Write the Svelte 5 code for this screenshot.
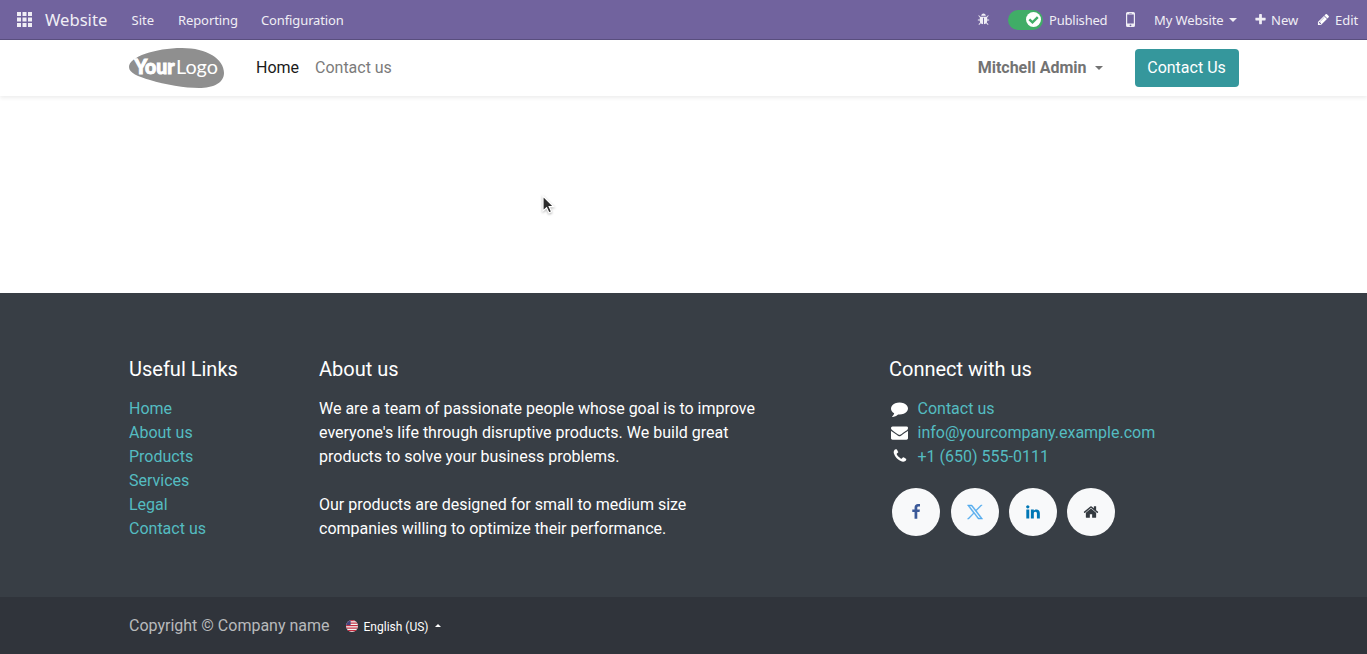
<script>
  const icons = {
    bug: 'M1696 960q0 26-19 45t-45 19h-224q0 171-67 290l208 209q19 19 19 45t-19 45q-18 19-45 19t-45-19l-198-197q-5 5-15 13t-42 28.5-65 36.5-82 29-97 13v-896h-128v896q-51 0-101.5-13.5t-87-33-66-39-43.5-32.5l-15-14-183 207q-20 21-48 21-24 0-43-16-19-18-20.5-44.5t15.5-46.5l202-227q-58-114-58-274h-224q-26 0-45-19t-19-45 19-45 45-19h224v-294l-173-173q-19-19-19-45t19-45 45-19 45 19l173 173h844l173-173q19-19 45-19t45 19 19 45-19 45l-173 173v294h224q26 0 45 19t19 45zm-480-576h-640q0-133 93.5-226.5t226.5-93.5 226.5 93.5 93.5 226.5z',
    plus: 'M1600 736v192q0 40-28 68t-68 28h-416v416q0 40-28 68t-68 28h-192q-40 0-68-28t-28-68v-416h-416q-40 0-68-28t-28-68v-192q0-40 28-68t68-28h416v-416q0-40 28-68t68-28h192q40 0 68 28t28 68v416h416q40 0 68 28t28 68z',
    pencil: 'M491 1536l91-91-235-235-91 91v107h128v128h107zm523-928q0-22-22-22-10 0-17 7l-542 542q-7 7-7 17 0 22 22 22 10 0 17-7l542-542q7-7 7-17zm-54-192l416 416-832 832h-416v-416zm683 96q0 53-37 90l-166 166-416-416 166-165q36-38 90-38 53 0 91 38l235 234q37 39 37 91z',
    comment: 'M1792 896q0 174-120 321.5t-326 233-450 85.5q-70 0-145-8-198 175-460 242-49 14-114 22h-5q-15 0-27-10.5t-16-27.5v-1q-3-4-.5-12t2-10 4.5-9.5l6-9 7-8.5 8-9q7-8 31-34.5t34.5-38 31-39.5 32.5-51 27-59 26-76q-157-89-247.5-220t-90.5-281q0-174 120-321.5t326-233 450-85.5 450 85.5 326 233 120 321.5z',
    envelope: 'M1792 710v794q0 66-47 113t-113 47h-1472q-66 0-113-47t-47-113v-794q44 49 101 87 362 246 497 345 57 42 92.5 65.5t94.5 48 110 24.5h2q51 0 110-24.5t94.5-48 92.5-65.5q170-123 498-345 57-39 100-87zm0-294q0 79-49 151t-122 123q-376 261-468 325-10 7-42.5 31t-54 38.5-52 32.5-57.5 27-50 9h-2q-23 0-50-9t-57.5-27-52-32.5-54-38.5-42.5-31q-91-64-262-182.5t-205-142.5q-62-42-117-115.5t-55-136.5q0-78 41.5-130t118.5-52h1472q65 0 112.5 47t47.5 113z',
    phone: 'M1600 1240q0 27-10 70.5t-21 68.5q-21 50-122 106-94 51-186 51-27 0-53-3.5t-57.5-12.5-47-14.5-55.5-20.5-49-18q-98-35-175-83-127-79-264-216t-216-264q-48-77-83-175-3-9-18-49t-20.5-55.5-14.5-47-12.5-57.5-3.5-53q0-92 51-186 56-101 106-122 25-11 68.5-21t70.5-10q14 0 21 3 18 6 53 76 11 19 30 54t35 63.5 31 53.5q3 4 17.5 25t21.5 35.5 7 28.5q0 20-28.5 50t-62 55-62 53-28.5 46q0 9 5 22.5t8.5 20.5 14 24 11.5 19q76 137 174 235t235 174q2 1 19 11.5t24 14 20.5 8.5 22.5 5q18 0 46-28.5t53-62 55-62 50-28.5q14 0 28.5 7t35.5 21.5 25 17.5q25 15 53.5 31t63.5 35 54 30q70 35 76 53 3 7 3 21z',
    facebook: 'M1343 12v264h-157q-86 0-116 36t-30 108v189h293l-39 296h-254v759h-306v-759h-255v-296h255v-218q0-186 104-288.5t277-102.5q147 0 228 12z',
    linkedin: 'M477 625v991h-330v-991h330zm21-306q1 73-50.5 122t-135.5 49h-2q-82 0-132-49t-50-122q0-74 51.5-122.5t134.5-48.5 133 48.5 51 122.5zm1166 729v568h-329v-530q0-105-40.5-164.5t-126.5-59.5q-63 0-105.5 34.5t-63.5 85.5q-11 30-11 81v553h-329q2-399 2-647t-1-296l-1-48h329v144h-2q20-32 41-56t56.5-52 87-43.5 114.5-15.5q171 0 275 113.5t104 332.5z',
    home: 'M1472 992v480q0 26-19 45t-45 19h-384v-384h-256v384h-384q-26 0-45-19t-19-45v-480q0-1 .5-3t.5-3l575-474 575 474q1 2 1 6zm223-69l-62 74q-8 9-21 11h-3q-13 0-21-7l-692-577-692 577q-12 8-24 7-13-2-21-11l-62-74q-8-10-7-23.5t11-21.5l719-599q32-26 76-26t76 26l244 204v-195q0-14 9-23t23-9h192q14 0 23 9t9 23v408l219 182q10 8 11 21.5t-7 23.5z'
  };
  const links = ['Home', 'About us', 'Products', 'Services', 'Legal', 'Contact us'];
  const contacts = [
    ['comment', 'Contact us'],
    ['envelope', 'info@yourcompany.example.com'],
    ['phone', '+1 (650) 555-0111']
  ];
</script>

{#snippet icon(name, size)}
  <svg class="icon" width={size} height={size} viewBox="0 0 1792 1792"><path d={icons[name]} /></svg>
{/snippet}

<div class="page">
  <nav class="topbar">
    <svg class="apps" width="15" height="15" viewBox="0 0 15 15">
      {#each [0, 5.5, 11] as y}
        {#each [0, 5.5, 11] as x}
          <rect {x} {y} width="4" height="4" />
        {/each}
      {/each}
    </svg>
    <span class="brand">Website</span>
    <span class="menu site">Site</span>
    <span class="menu reporting">Reporting</span>
    <span class="menu config">Configuration</span>
    <div class="systray">
      <span class="bug">{@render icon('bug', 13)}</span>
      <span class="switch">
        <svg width="15" height="15" viewBox="0 0 15 15">
          <circle cx="7.5" cy="7.5" r="7.5" fill="#fff" />
          <path d="M3.3 7.3 6.5 10.4 11.8 5.1" fill="none" stroke="#40ad67" stroke-width="2.4" />
        </svg>
      </span>
      <span class="published">Published</span>
      <svg class="mobile" width="9" height="15" viewBox="0 0 9 15">
        <path fill-rule="evenodd" d="M1.6 0h5.8Q9 0 9 1.6v11.8Q9 15 7.4 15H1.6Q0 15 0 13.4V1.6Q0 0 1.6 0ZM1.2 2.6v9h6.6v-9ZM3.2 1v.6h2.6V1ZM4.5 12.4a.9.9 0 1 0 0 1.8.9.9 0 0 0 0-1.8Z" />
      </svg>
      <span class="mysite">My Website</span>
      <i class="caret light"></i>
      <span class="new-icon">{@render icon('plus', 13)}</span>
      <span class="new">New</span>
      <span class="edit-icon">{@render icon('pencil', 13)}</span>
      <span class="edit">Edit</span>
    </div>
  </nav>

  <header>
    <div class="container head">
      <svg class="logo" width="95" height="40" viewBox="0 0 95 40">
        <path d="M0 19C0 9 26 0 53 0C78 0 95 11 95 25C95 35 84 40 70 40C56 40 36 36.5 21 32C9 28.500 0 25 0 19Z" fill="#8f8f8f" />
        <path d="M4 10.500H9L8 13Z" />
        <text x="5.500" y="26" class="logo-bold" textLength="40" lengthAdjust="spacingAndGlyphs">Your</text>
        <text x="47" y="26" class="logo-thin" textLength="42" lengthAdjust="spacingAndGlyphs">Logo</text>
      </svg>
      <a class="nav-home" href="#home">Home</a>
      <a class="nav-contact" href="#contact">Contact us</a>
      <span class="user">Mitchell Admin</span>
      <i class="caret dark"></i>
      <a class="cta" href="#contact">Contact Us</a>
    </div>
  </header>

  <main></main>

  <footer>
    <div class="container columns">
      <section class="useful">
        <h5>Useful Links</h5>
        {#each links as link}
          <a class="row" href="#link">{link}</a>
        {/each}
      </section>
      <section class="about">
        <h5>About us</h5>
        <p>We are a team of passionate people whose goal is to improve<br />everyone's life through disruptive products. We build great<br />products to solve your business problems.</p>
        <p>Our products are designed for small to medium size<br />companies willing to optimize their performance.</p>
      </section>
      <section class="connect">
        <h5>Connect with us</h5>
        {#each contacts as [name, label]}
          <div class="row contact">
            <span class="fw">{@render icon(name, name === 'phone' ? 16 : 17)}</span>
            <a href="#contact">{label}</a>
          </div>
        {/each}
        <div class="socials">
          <span class="round fb">{@render icon('facebook', 16)}</span>
          <span class="round tw">
            <svg width="16" height="16" viewBox="0 0 24 24">
              <path d="M14.26 10.16 22.8 1.500h-2.030l-7.410 7.450L7.450 1.500H.6l8.960 12.020L.6 22.600h2.030l7.830-8.400 6.260 8.400h6.840ZM3.600 3h3.050l13.900 18.100H17.500Z" fill-rule="evenodd" />
            </svg>
          </span>
          <span class="round li">{@render icon('linkedin', 16)}</span>
          <span class="round hm">{@render icon('home', 16)}</span>
        </div>
      </section>
    </div>
    <div class="copyright">
      <div class="container copy-row">
        <span class="copy">Copyright © Company name</span>
        <svg class="flag" width="12" height="12" viewBox="0 0 12 12">
          <defs><clipPath id="flag-round"><circle cx="6" cy="6" r="6" /></clipPath></defs>
          <g clip-path="url(#flag-round)">
            <rect width="12" height="12" fill="#f5f5f5" />
            {#each [0, 2.5, 5, 7.5, 10] as y}
              <rect {y} width="12" height="1.2" fill="#c3293d" />
            {/each}
            <rect width="4.6" height="5" fill="#43457d" />
          </g>
        </svg>
        <span class="lang">English (US)</span>
        <i class="caret up"></i>
      </div>
    </div>
  </footer>

  <svg class="pointer" width="16" height="22" viewBox="0 0 16 22">
    <path d="M2 2v15l3.6-3.3 2.4 5.2 2.6-1.2-2.4-5h4.6Z" fill="#2b2b2b" stroke="#fff" stroke-width="1.2" />
  </svg>
</div>

<style>
  :global(body) { margin: 0; }
  .page {
    height: 654px;
    display: flex;
    flex-direction: column;
    overflow: hidden;
    font: 16px/24px Roboto, sans-serif;
    background: #fff;
  }
  a { text-decoration: none; }
  svg { display: block; flex: none; }
  .icon { fill: currentColor; }
  .topbar {
    box-sizing: border-box;
    height: 40px;
    flex: none;
    display: flex;
    align-items: center;
    padding: 0 8px 0 17px;
    background: #71639e;
    border-bottom: 1px solid #5a4f7f;
    color: #f0eef5;
    font: 13px/39px "Noto Sans", sans-serif;
    white-space: nowrap;
  }
  .apps { fill: #f0eef5; }
  .brand { flex: none; width: 73px; margin: 0 13.500px 0 13px; font-size: 16.600px; }
  .menu { flex: none; padding-top: 2px; line-height: 37px; }
  .site { width: 46.500px; }
  .reporting { width: 83px; letter-spacing: -0.1px; }
  .config { letter-spacing: -0.12px; }
  .systray { margin-left: auto; display: flex; align-items: center; }
  .bug { width: 31px; }
  .switch {
    box-sizing: border-box;
    width: 35px;
    height: 20px;
    padding: 2px;
    display: flex;
    justify-content: flex-end;
    align-items: center;
    border-radius: 10px;
    background: #40ad67;
  }
  .published, .mysite, .new, .edit { padding-top: 2px; line-height: 37px; }
  .published { width: 77px; margin-left: 6px; letter-spacing: -0.2px; }
  .mobile { fill: #f0eef5; margin-right: 19px; }
  .mysite { width: 75px; letter-spacing: -0.1px; }
  .new-icon { margin-left: 17px; width: 17px; }
  .new { width: 46px; }
  .edit-icon { width: 18px; color: #fff; }
  .edit { width: 24px; }
  .caret { flex: none; width: 0; height: 0; border: 4px solid transparent; border-bottom: 0; }
  .light { border-top-color: #f0eef5; }
  .dark { border-top-color: #737373; margin: 0 32px 0 8.500px; }
  header {
    height: 56px;
    flex: none;
    background: #fff;
    box-shadow: 0 2px 4px rgba(0, 0, 0, 0.075);
  }
  .container { box-sizing: border-box; width: 1110px; margin-left: 129px; }
  .head { display: flex; align-items: center; height: 56px; }
  .logo { fill: #fff; margin-right: 32px; }
  .logo-bold { font: 900 20px Lato, sans-serif; stroke: #fff; stroke-width: 1px; }
  .logo-thin { font: 400 20px Lato, sans-serif; }
  .nav-home { color: #1a1a1a; margin-right: 16px; }
  .nav-contact { color: #7b7b7b; letter-spacing: -0.02px; }
  .user { margin-left: auto; color: #737373; font-weight: 700; }
  .cta {
    box-sizing: border-box;
    width: 104px;
    height: 38px;
    line-height: 38px;
    padding-right: 1px;
    text-align: center;
    color: #fff;
    background: #35979c;
    border-radius: 4px;
  }
  main { height: 197px; flex: none; }
  footer { flex: 1; background: #383e45; color: #fff; display: flex; flex-direction: column; }
  .columns {
    display: grid;
    grid-template-columns: 190px 570px 350px;
    padding-top: 64px;
    height: 304px;
    flex: none;
  }
  h5 { margin: 0 0 16px; font-size: 20px; line-height: 24px; font-weight: 400; }
  p { margin: 0 0 24px; white-space: nowrap; }
  .row { display: block; height: 24px; }
  footer a { color: #54bcc1; }
  .contact { display: flex; align-items: center; }
  .fw { width: 21px; margin: -2px 7.500px 0 0; display: flex; justify-content: center; }
  .socials { display: flex; gap: 10px; margin: 19px 0 0 3px; }
  .round {
    width: 48px;
    height: 48px;
    display: grid;
    place-items: center;
    border-radius: 50%;
    background: #f8f9fa;
  }
  .fb { color: #3b5998; margin-right: 1px; }
  .tw { fill: #55acee; stroke: #55acee; stroke-width: 0.7px; }
  .li { color: #0077b5; }
  .hm { color: #343a40; }
  .copyright { flex: 1; background: #30343b; }
  .copy-row { display: flex; align-items: center; height: 57px; }
  .copy { color: #b8babc; margin-right: 16px; }
  .lang { font-size: 12px; margin: 2px 6px 0 6px; }
  .up { border: 3px solid transparent; border-top: 0; border-bottom-color: #fff; }
  .pointer { position: absolute; left: 541px; top: 194px; filter: drop-shadow(0 1px 1px rgba(0, 0, 0, 0.3)); }
</style>
